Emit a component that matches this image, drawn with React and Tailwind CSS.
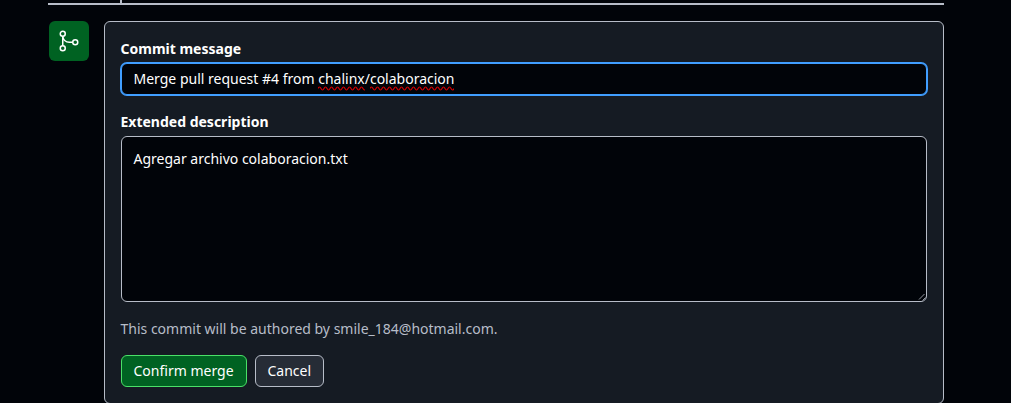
import React from "react";

function MergeIcon() {
  return (
    <svg width="24" height="24" viewBox="0 0 24 24" fill="none" stroke="#ffffff" strokeWidth="1.5" aria-hidden="true">
      <circle cx="5.75" cy="4.75" r="2.5" />
      <circle cx="5.75" cy="19.25" r="2.5" />
      <circle cx="18.25" cy="13.25" r="2.5" />
      <path d="M5.75 7.25v9.5M5.75 7.25c.6 3.6 3.2 6 6.6 6h3.4" />
    </svg>
  );
}

function Misspelled({ children, width }) {
  const waves = [];
  for (let x = 0; x < width; x += 6) waves.push("q1.5 -3 3 0t3 0");
  return (
    <span className="relative inline-block">
      {children}
      <svg className="absolute left-0 top-[17px]" width={width} height="5" viewBox={`0 0 ${width} 5`} fill="none" stroke="#d80000" strokeWidth="1.2" aria-hidden="true">
        <path d={"M0 2.5" + waves.join("")} />
      </svg>
    </span>
  );
}

export default function App() {
  return (
    <div className="flex h-[403px] w-[1011px] flex-col overflow-hidden bg-[#010409] px-12 font-['Noto_Sans',sans-serif] text-sm leading-5 text-white">
      <div className="ml-[72px] h-[3px] w-[2px] shrink-0 bg-[#b7bdc8]" />
      <div className="h-[2px] w-[896px] shrink-0 bg-[#b7bdc8]" />
      <div className="mt-4 flex w-[896px] shrink-0 items-start">
        <div className="ml-px flex size-10 items-center justify-center rounded-md bg-[#006222]">
          <MergeIcon />
        </div>
        <div className="ml-[15px] h-[383px] w-[840px] rounded-md border border-[#b7bdc8] bg-[#151b23] px-4 pt-[17px]">
          <div className="-ml-[0.5px] font-bold">Commit message</div>
          <div className="mt-1 flex h-8 items-center whitespace-pre rounded-md border border-[#409eff] bg-[#010409] pl-[11.5px] shadow-[0_0_0_1px_#409eff]">
            <span>Merge pull request #4 from <Misspelled width={47}>chalinx</Misspelled>/<Misspelled width={84}>colaboracion</Misspelled></span>
          </div>
          <div className="-ml-[0.5px] mt-[17px] font-bold">Extended description</div>
          <div className="mt-1 flex h-[166px] items-start justify-between rounded-md border border-[#b7bdc8] bg-[#010409] pl-[11.5px]">
            <div className="pt-3">Agregar archivo colaboracion.txt</div>
            <svg className="self-end" width="9" height="9" viewBox="0 0 9 9" stroke="#b7bdc8" strokeWidth="0.8" aria-hidden="true">
              <path d="M2 7.5l5.5-5.5M5.5 8.5l3-3" />
            </svg>
          </div>
          <div className="-ml-[0.5px] mt-[17px] text-[#b7bdc8]">This commit will be authored by smile_184@hotmail.com.</div>
          <div className="mt-4 flex gap-2">
            <button type="button" className="h-8 w-[126px] whitespace-nowrap rounded-md border border-[#4ae168] bg-[#006222] pl-[11.5px] text-left font-normal">Confirm merge</button>
            <button type="button" className="h-8 w-[69px] rounded-md border border-[#b7bdc8] bg-[#262c36] pl-[11.5px] text-left font-normal">Cancel</button>
          </div>
        </div>
      </div>
    </div>
  );
}
